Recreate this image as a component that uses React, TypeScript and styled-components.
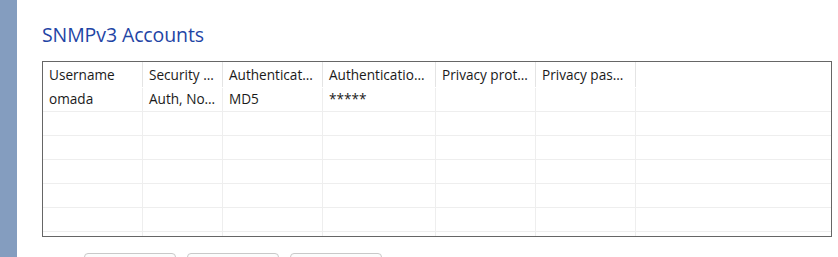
import React from 'react';
import styled, { createGlobalStyle } from 'styled-components';

const SIDEBAR_BLUE = '#849dbf';
const TITLE_BLUE = '#1f45a5';
const FRAME_GREY = '#666666';
const HEADER_LINE = '#e4e4e4';
const ROW_LINE = '#eeeeee';
const TEXT = '#1a1a1a';

const COLUMNS = [
  { title: 'Username', width: 100 },
  { title: 'Security level', width: 80 },
  { title: 'Authentication protocol', width: 100 },
  { title: 'Authentication password', width: 113 },
  { title: 'Privacy protocol', width: 100 },
  { title: 'Privacy password', width: 100 },
];

const ACCOUNTS = [['omada', 'Auth, NoPriv', 'MD5', '*****', '', '']];

const EMPTY_ROWS = 6;

const GlobalStyle = createGlobalStyle`
  html, body {
    margin: 0;
    padding: 0;
    background: #ffffff;
    overflow: hidden;
  }
  body {
    font-family: 'Open Sans', 'Noto Sans', sans-serif;
  }
`;

export default function App() {
  const rows = [
    ...ACCOUNTS,
    ...Array.from({ length: EMPTY_ROWS }, () => COLUMNS.map(() => '')),
  ];

  return (
    <>
      <GlobalStyle />
      <Page>
        <Sidebar />
        <Content>
          <Title>SNMPv3 Accounts</Title>
          <Frame>
            <HeaderRow>
              {COLUMNS.map((col) => (
                <HeaderCell key={col.title} $width={col.width}>
                  {col.title}
                </HeaderCell>
              ))}
            </HeaderRow>
            {rows.map((row, i) => (
              <Row key={i}>
                {row.map((value, j) => (
                  <Cell key={j} $width={COLUMNS[j].width}>
                    {value}
                  </Cell>
                ))}
              </Row>
            ))}
          </Frame>
          <Buttons>
            <Button>Add</Button>
            <Button>Edit</Button>
            <Button>Remove</Button>
          </Buttons>
        </Content>
      </Page>
    </>
  );
}

const Page = styled.div`
  display: flex;
  width: 838px;
  height: 257px;
  overflow: hidden;
`;

const Sidebar = styled.div`
  width: 17px;
  flex-shrink: 0;
  background: ${SIDEBAR_BLUE};
`;

const Content = styled.div`
  display: flex;
  flex-direction: column;
  padding: 20px 0 0 25px;
`;

const Title = styled.h2`
  flex-shrink: 0;
  margin: 0 0 12px;
  font-size: 19.5px;
  font-weight: 400;
  line-height: 29px;
  color: ${TITLE_BLUE};
  letter-spacing: -0.1px;
`;

const Frame = styled.div`
  flex-shrink: 0;
  box-sizing: border-box;
  width: 790px;
  height: 176px;
  border: 1px solid ${FRAME_GREY};
  overflow: hidden;
`;

const HeaderRow = styled.div`
  display: flex;
  height: 26px;
`;

const HeaderCell = styled.div<{ $width: number }>`
  box-sizing: border-box;
  width: ${(p) => p.$width}px;
  flex-shrink: 0;
  height: 25px;
  padding: 2px 6px 0 6px;
  border-right: 1px solid ${HEADER_LINE};
  font-size: 13.6px;
  line-height: 22px;
  color: ${TEXT};
  white-space: nowrap;
  overflow: hidden;
  text-overflow: ellipsis;
`;

const Row = styled.div`
  display: flex;
  box-sizing: border-box;
  height: 24px;
  border-bottom: 1px solid ${ROW_LINE};
`;

const Cell = styled.div<{ $width: number }>`
  box-sizing: border-box;
  width: ${(p) => p.$width}px;
  flex-shrink: 0;
  padding: 0 4px 0 6px;
  border-right: 1px solid ${ROW_LINE};
  font-size: 13.6px;
  line-height: 22px;
  color: ${TEXT};
  white-space: nowrap;
  overflow: hidden;
  text-overflow: ellipsis;
`;

const Buttons = styled.div`
  flex-shrink: 0;
  display: flex;
  gap: 11px;
  margin: 16px 0 0 42px;
`;

const Button = styled.button`
  box-sizing: border-box;
  width: 92px;
  height: 26px;
  border: 1px solid #c9c9c9;
  border-radius: 4px;
  background: #fcfcfc;
  font-family: 'Open Sans', sans-serif;
  font-size: 14px;
  color: ${TEXT};
  padding: 0;
`;
